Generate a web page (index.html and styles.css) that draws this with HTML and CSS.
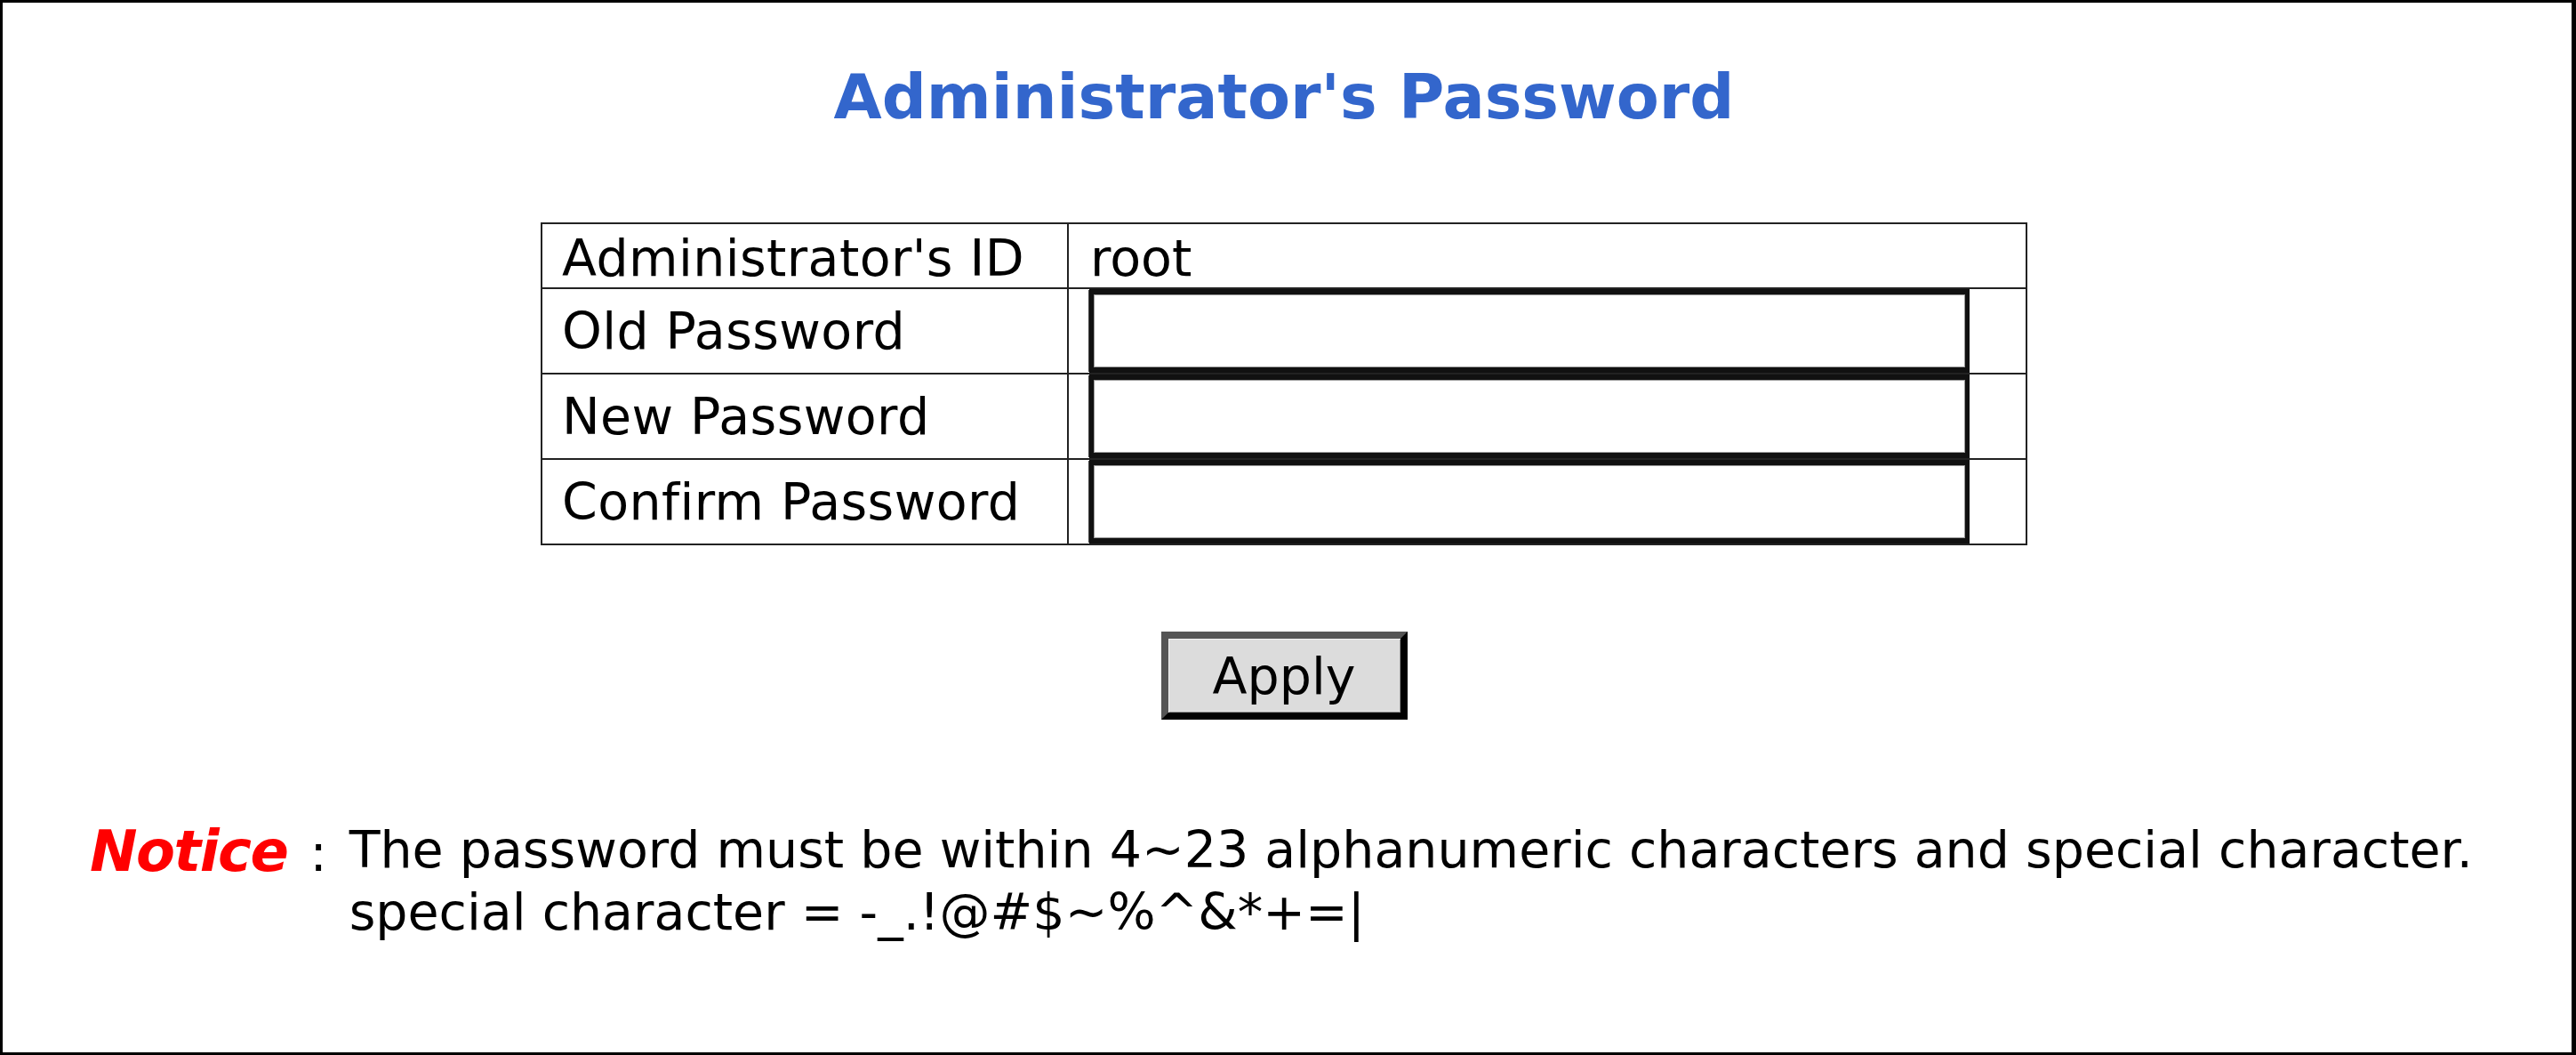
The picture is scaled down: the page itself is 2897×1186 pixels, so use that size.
FILE: index.html
```html
<!DOCTYPE html>
<html lang="en">
<head>
<meta charset="utf-8">
<title>Administrator's Password</title>
<link rel="stylesheet" href="styles.css">
</head>
<body>
<div class="page">
  <h1 class="title">Administrator's Password</h1>
  <table class="form-table">
    <tr class="id-row">
      <td class="label">Administrator's ID</td>
      <td class="value">root</td>
    </tr>
    <tr>
      <td class="label">Old Password</td>
      <td class="field"><input type="password" class="pw"></td>
    </tr>
    <tr>
      <td class="label">New Password</td>
      <td class="field"><input type="password" class="pw"></td>
    </tr>
    <tr>
      <td class="label">Confirm Password</td>
      <td class="field"><input type="password" class="pw"></td>
    </tr>
  </table>
  <div class="actions"><button type="button" class="apply">Apply</button></div>
  <div class="notice">
    <div class="notice-head"><span class="notice-word">Notice</span><span class="colon">:</span></div>
    <div class="notice-text">
      <div>The password must be within 4~23 alphanumeric characters and special character.</div>
      <div>special character = -_.!@#$~%^&amp;*+=|</div>
    </div>
  </div>
</div>
</body>
</html>
```
FILE: styles.css
```css
html, body {
  margin: 0;
  padding: 0;
  background: #fff;
}

body {
  font-family: "DejaVu Sans", Verdana, sans-serif;
  color: #000;
}

.page {
  box-sizing: border-box;
  width: 2897px;
  height: 1186px;
  border: 3px solid #000;
  border-right-width: 5px;
  padding-right: 7px;
  display: flex;
  flex-direction: column;
  align-items: center;
}

.title {
  margin: 65px 0 0;
  font-size: 70px;
  line-height: 82px;
  font-weight: bold;
  color: #3366cc;
}

.form-table {
  margin-top: 100px;
  border-collapse: collapse;
  table-layout: fixed;
  width: 1672px;
  font-size: 57px;
}

.form-table td {
  border: 2px solid #222;
  padding: 0;
  vertical-align: middle;
  white-space: nowrap;
}

.form-table td.label {
  width: 592px;
  padding-left: 22px;
  letter-spacing: 0.4px;
}

.id-row td {
  height: 73px;
  line-height: 66px;
  padding-top: 4px;
  box-sizing: border-box;
}

.form-table td.value {
  padding-left: 24px;
}

.form-table td.field {
  padding-left: 23px;
}

.pw {
  display: block;
  box-sizing: border-box;
  width: 990px;
  height: 94px;
  margin: 0;
  padding: 0;
  border-style: solid;
  border-color: #111;
  border-width: 6px 5px;
  background: #fff;
  box-shadow: inset 0 0 0 1px #9a9a9a, -2px 0 0 -1px #444;
}

.actions {
  margin-top: 97px;
}

.apply {
  box-sizing: border-box;
  width: 277px;
  height: 99px;
  padding: 0;
  border: 8px solid;
  border-color: #555 #000 #000 #555;
  background: #dcdcdc;
  font-family: "DejaVu Sans", Verdana, sans-serif;
  font-size: 57px;
  color: #000;
  box-shadow: inset 1px 1px 0 #f2f2f2, inset -1px -1px 0 #9a9a9a;
}

.notice {
  align-self: stretch;
  margin-top: 111px;
  padding-left: 98px;
  display: flex;
  align-items: flex-start;
}

.notice-head {
  white-space: nowrap;
}

.notice-word {
  font-size: 64px;
  font-weight: bold;
  font-style: italic;
  letter-spacing: -1.5px;
  color: #ff0000;
}

.colon {
  font-size: 57px;
  margin-left: 25px;
}

.notice-text {
  margin-left: 25px;
  font-size: 57px;
  line-height: 70px;
  white-space: nowrap;
}
```
